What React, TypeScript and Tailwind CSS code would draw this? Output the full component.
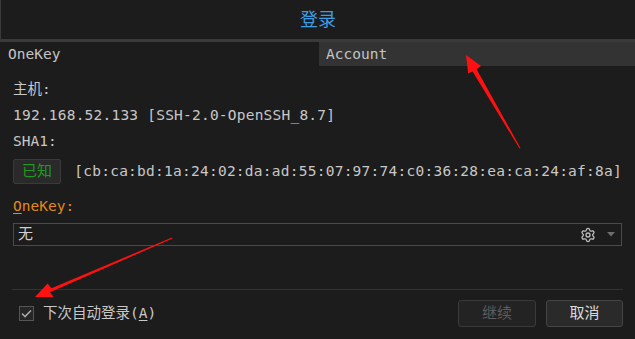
import React from "react"
import { Settings } from "lucide-react"

const mono = "font-['DejaVu_Sans_Mono','Noto_Sans_CJK_SC',monospace]"
const cjk = "font-['DejaVu_Sans_Mono','Noto_Sans_CJK_SC',sans-serif]"

const Arrows = () => (
  <svg className="pointer-events-none absolute left-0 top-0" width="635" height="339">
    <polygon
      fill="#ff1111"
      points="520.5,148 476.6,69.2 481,66 466,55 468.2,73.6 472.6,71.4 519.5,148.5"
    />
    <polygon
      fill="#ff1111"
      points="172,237.5 51.5,288.2 47.6,283.6 35,297 53.6,297 50,292.2 172.5,238.5"
    />
  </svg>
)

const Checkbox = () => (
  <div className="flex h-[15px] w-[15px] items-center justify-center border border-[#555] bg-[#262626]">
    <svg width="11" height="9" viewBox="0 0 11 9">
      <path d="M1 4.5 L4 7.5 L10 1.5" stroke="#a8a8a8" strokeWidth="1.6" fill="none" />
    </svg>
  </div>
)

export default function App() {
  return (
    <div className={`relative flex h-[339px] w-[635px] flex-col overflow-hidden bg-[#1c1c1c] text-[#c8c8c8] ${mono}`}>
      <div className="flex h-[39px] items-center justify-center border-l border-[#3a3a3a]">
        <span className={`text-[18px] text-[#3d9ce6] ${cjk}`}>登录</span>
      </div>
      <div className="h-[3px] bg-[#3a3a3a]" />
      <div className="flex h-[24px] pt-[2px] text-[14.5px]">
        <div className="flex w-[319px] items-center pl-[8px] text-[#c4c4c4]">OneKey</div>
        <div className="-mt-[2px] flex flex-1 items-center bg-[#333] pl-[7px] pt-[2px] text-[#c4c4c4]">Account</div>
      </div>

      <div className="flex flex-col px-[13px] pt-[10px] text-[14.5px]">
        <div className="flex h-[28px] items-center">主机:</div>
        <div className="flex h-[23px] items-center tracking-[0.22px]">192.168.52.133 [SSH-2.0-OpenSSH_8.7]</div>
        <div className="flex h-[30px] items-center">SHA1:</div>
        <div className="mt-[2px] flex h-[25px] items-center gap-[13px]">
          <button className="flex h-[25px] w-[54px] items-center justify-center rounded-[2px] border border-[#3a3a3a] bg-[#2a2a2a] text-[15px] text-[#1f9a1f]">
            已知
          </button>
          <span className="tracking-[0.25px]">[cb:ca:bd:1a:24:02:da:ad:55:07:97:74:c0:36:28:ea:ca:24:af:8a]</span>
        </div>
        <div className="mt-[11px] flex h-[24px] items-center text-[#e08a1a]">
          <span className="underline decoration-1 underline-offset-2">O</span>
          <span>neKey:</span>
        </div>
        <div className="mt-[4px] flex h-[23px] items-center border border-[#4a4a4a] pl-[4px] pr-[6px]">
          <span className="flex-1 text-[15px] text-[#d0d0d0]">无</span>
          <Settings size={16} color="#bdbdbd" strokeWidth={2} />
          <svg className="ml-[11px]" width="8" height="5" viewBox="0 0 8 5">
            <path d="M0 0 L8 0 L4 4.5 Z" fill="#6e6e6e" />
          </svg>
        </div>
      </div>

      <div className="mx-[12px] mt-[43px] h-px bg-[#333]" />

      <div className="flex items-center px-[12px] pt-[10px]">
        <div className="ml-[7px] mr-[9px]">
          <Checkbox />
        </div>
        <span className="flex-1 text-[14.5px] text-[#c8c8c8]">
          下次自动登录(<span className="underline decoration-1 underline-offset-2">A</span>)
        </span>
        <button className="flex h-[27px] w-[78px] items-center justify-center rounded-[3px] border border-[#3a3a3a] bg-[#232323] text-[15px] text-[#5c5c5c]">
          继续
        </button>
        <button className="ml-[10px] flex h-[27px] w-[77px] items-center justify-center rounded-[3px] border border-[#454545] bg-[#2a2a2a] text-[15px] text-[#dcdcdc]">
          取消
        </button>
      </div>

      <Arrows />
    </div>
  )
}
